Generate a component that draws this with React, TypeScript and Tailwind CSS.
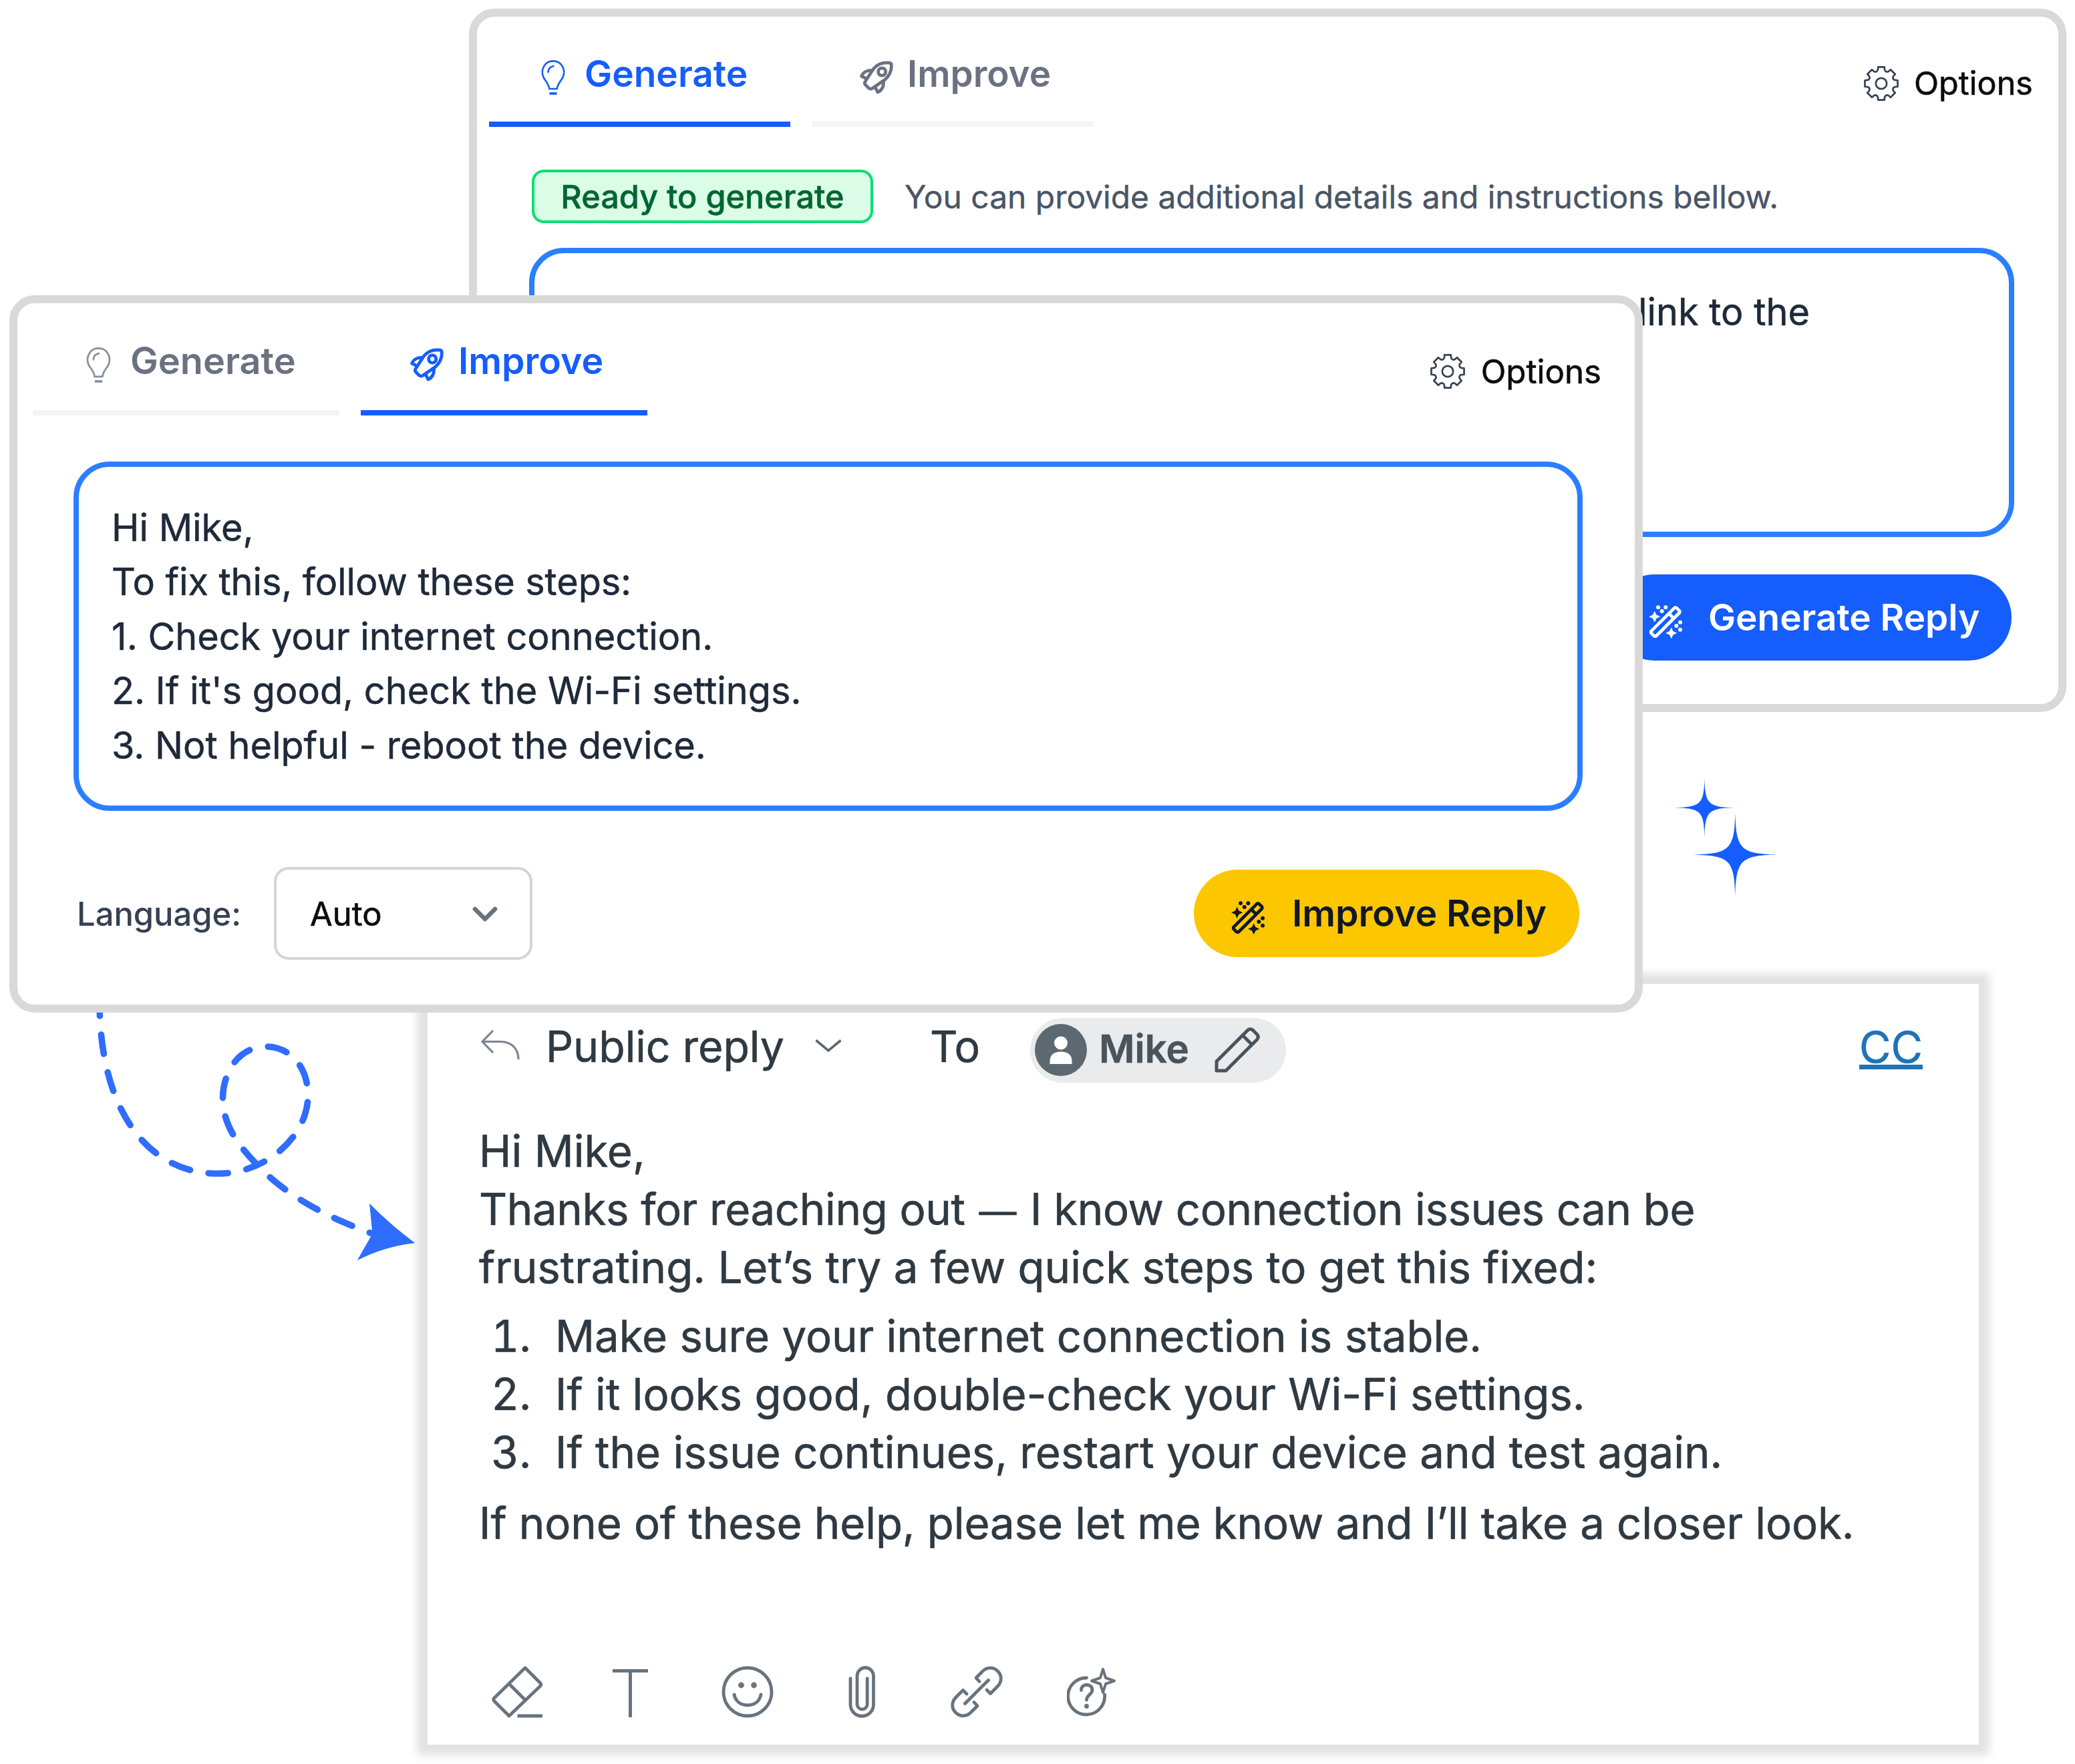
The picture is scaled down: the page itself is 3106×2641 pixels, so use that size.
import type { ReactNode } from "react";
import clsx from "clsx";

/* Icons */

function BulbIcon({ className }: { className?: string }) {
  return (
    <svg viewBox="0 0 52 52" fill="none" stroke="currentColor" strokeWidth="2.6" strokeLinejoin="round" strokeLinecap="round" className={className}>
      <path d="M20.2 43C19.8 36.5 15 32 11.6 26C6.4 14.5 13.5 1.4 26 1.4S45.6 14.5 40.4 26C37 32 32.2 36.5 31.8 43Z" />
      <path d="M18.5 18C18.8 13 21.5 9.8 26.5 9" />
      <path d="M20.5 50H31.5" strokeWidth="3.6" strokeLinecap="butt" />
    </svg>
  );
}

function RocketIcon({ className }: { className?: string }) {
  return (
    <svg viewBox="0 0 50 50" fill="none" stroke="currentColor" strokeWidth="4.8" strokeLinejoin="round" strokeLinecap="round" className={className}>
      <path d="M44.5 3.2Q47 3.4 47.2 5.8C48 14.5 44.5 22 38 28L18.5 41.5Q15.8 43 13.5 41L8.5 36Q6.5 33.8 8 31.2L20.5 12C26.5 5 34.5 2 44.5 3.2Z" />
      <circle cx="33.2" cy="16.5" r="5.6" />
      <path d="M18.5 14.5C10.5 14 4.5 17.5 2.6 23.2L9.5 26.5" />
      <path d="M35.5 31C36 39.5 32.5 44.5 26.8 47L23.5 40.5" />
    </svg>
  );
}

function point(deg: number, r: number) {
  const a = ((deg - 90) * Math.PI) / 180;
  return `${(27 + r * Math.cos(a)).toFixed(2)} ${(27 + r * Math.sin(a)).toFixed(2)}`;
}

const gearPath =
  [0, 45, 90, 135, 180, 225, 270, 315]
    .map((a, i) => `${i === 0 ? "M" : "L"}${point(a - 11, 25)}L${point(a + 11, 25)}L${point(a + 14, 21)}Q${point(a + 22.5, 17.5)} ${point(a + 31, 21)}`)
    .join("") + "Z";

function GearIcon({ className }: { className?: string }) {
  return (
    <svg viewBox="0 0 54 54" fill="none" stroke="currentColor" strokeWidth="2.7" strokeLinejoin="round" className={className}>
      <path d={gearPath} />
      <circle cx="27" cy="27" r="8.2" />
    </svg>
  );
}

function WandIcon({ className }: { className?: string }) {
  return (
    <svg viewBox="0 0 50 50" fill="currentColor" className={className}>
      <g transform="rotate(-45 23.7 25.2)" fill="none" stroke="currentColor" strokeWidth="4.8">
        <rect x="-3" y="20" width="53.5" height="10.4" rx="2.5" />
        <path d="M36.5 20V30.4" />
      </g>
      <path d="M7.7 8.8L10.4 14.6L16.2 17.3L10.4 20L7.7 25.8L5 20L-.8 17.3L5 14.6Z" />
      <path d="M32.7 33.2L35.4 39L41.2 41.7L35.4 44.4L32.7 50.2L30 44.4L24.2 41.7L30 39Z" />
      <circle cx="13" cy="3.3" r="3" />
      <circle cx="24.3" cy="3.3" r="3" />
      <circle cx="18.7" cy="9" r="3" />
      <circle cx="46" cy="25.7" r="3" />
      <circle cx="40.3" cy="31" r="3" />
      <circle cx="46" cy="36.7" r="3" />
    </svg>
  );
}

function Sparkle({ cx, cy, r }: { cx: number; cy: number; r: number }) {
  return (
    <path
      transform={`translate(${cx} ${cy}) scale(${r})`}
      d="M0-1C.02-.13 .13-.02 1 0C.13.02 .02.13 0 1C-.02.13-.13.02-1 0C-.13-.02-.02-.13 0-1Z"
    />
  );
}

/* Assistant cards */

function Tab({ icon, label, active, className }: { icon: ReactNode; label: string; active?: boolean; className?: string }) {
  return (
    <div
      className={clsx(
        "flex shrink-0 items-start border-b-8 font-semibold leading-[64px]",
        active ? "border-[#155dfc] text-[#155dfc]" : "border-gray-100 text-[#6a7282]",
        className
      )}
    >
      {icon}
      <span>{label}</span>
    </div>
  );
}

function Options({ className }: { className?: string }) {
  return (
    <div className={clsx("ml-auto flex items-center leading-[56px] text-[#0c0c0e]", className)}>
      <GearIcon className="size-[54px] text-[#364153]" />
      <span className="[-webkit-text-stroke:0.6px]">Options</span>
    </div>
  );
}

function GenerateCard() {
  return (
    <section className="absolute left-[702px] top-[13px] flex h-[1053px] w-[2391px] flex-col rounded-[38px] border-12 border-[#d9d9d9] bg-white">
      <div className="flex h-[165px] gap-8 pl-[18px]">
        <Tab
          active
          label="Generate"
          icon={<BulbIcon className="mt-[12px] size-[52px]" />}
          className="w-[451px] gap-[21px] pl-[70px] pt-[53px] text-[55px]"
        />
        <Tab
          label="Improve"
          icon={<RocketIcon className="mt-[13px] size-[50px]" />}
          className="w-[422px] gap-[21px] pl-[72px] pt-[53px] text-[54.8px]"
        />
        <Options className="mr-[38px] self-start gap-[22px] pt-[72px] text-[48.6px]" />
      </div>

      <div className="mt-[64px] flex items-center gap-[47px] pl-[82px]">
        <span className="flex h-20 w-[511px] items-center justify-center rounded-[18px] border-4 border-[#05df72] bg-green-100 pt-[2px] text-[48.6px] font-medium text-[#016630] [-webkit-text-stroke:0.5px]">
          Ready to generate
        </span>
        <span className="pt-[3px] text-[47.9px] text-[#4a5565] [-webkit-text-stroke:0.4px]">You can provide additional details and instructions bellow.</span>
      </div>

      <div className="ml-[78px] mt-[37px] h-[433px] w-[2223px] rounded-[52px] border-8 border-[#2b7fff] pl-[1652px] pt-[47px] text-[55.8px] leading-[82px] text-[#1e2939] [-webkit-text-stroke:0.5px]">
        link to the
      </div>

      <div className="mt-14 flex justify-end pr-[70px]">
        <button className="flex h-[129px] w-[599px] items-center rounded-full bg-[#155dfc] pl-[57px] text-[54.9px] font-semibold text-white">
          <WandIcon className="mr-[38px] mt-3 size-[50px] overflow-visible" />
          <span>Generate Reply</span>
        </button>
      </div>
    </section>
  );
}

function ImproveCard() {
  return (
    <section className="absolute left-[14px] top-[442px] flex h-[1074px] w-[2445px] flex-col rounded-[38px] border-12 border-[#d9d9d9] bg-white">
      <div className="flex h-[168px] gap-8 pl-[24px]">
        <Tab
          label="Generate"
          icon={<BulbIcon className="mt-[12px] size-[53px] opacity-80" />}
          className="w-[458px] gap-[21px] pl-[71px] pt-[54px] text-[55.8px]"
        />
        <Tab
          active
          label="Improve"
          icon={<RocketIcon className="mt-[13px] size-[50px]" />}
          className="w-[429px] gap-[22px] pl-[74px] pt-[54px] text-[55.3px]"
        />
        <Options className="mr-[50px] self-start gap-[23px] pt-[74px] text-[49.2px]" />
      </div>

      <div className="ml-[84px] mt-[69px] h-[523px] w-[2259px] rounded-[54px] border-8 border-[#2b7fff] pl-[49px] pt-[50px] text-[55.8px] leading-[81.4px] text-[#1e2939] [-webkit-text-stroke:0.5px]">
        <p>Hi Mike,</p>
        <p className="tracking-[-0.1px]">To fix this, follow these steps:</p>
        <p>1. Check your internet connection.</p>
        <p>2. If it's good, check the Wi-Fi settings.</p>
        <p>3. Not helpful - reboot the device.</p>
      </div>

      <div className="mt-[84px] flex items-center pl-[89px] pr-[83px] text-[48.9px]">
        <span className="w-[295px] pt-[2px] font-medium text-[#364153]">Language:</span>
        <div className="flex h-[139px] w-[387px] items-center justify-between rounded-[22px] border-4 border-gray-300 pl-[50px] pr-[48px] pt-[2px] text-[#0c0c0e]">
          <span className="[-webkit-text-stroke:0.6px]">Auto</span>
          <svg viewBox="0 0 38 24" fill="none" stroke="#6a7282" strokeWidth="6.6" strokeLinecap="round" strokeLinejoin="round" className="h-6 w-[38px]">
            <path d="M4 4L19 19L34 4" />
          </svg>
        </div>
        <button className="ml-auto flex h-[131px] w-[577px] items-center rounded-full bg-[#fdc700] pl-[57px] text-[55.3px] font-semibold text-[#101828]">
          <WandIcon className="mr-[40px] mt-3 size-[50px] overflow-visible" />
          <span>Improve Reply</span>
        </button>
      </div>
    </section>
  );
}

/* Ticket reply editor */

const steps = [
  "Make sure your internet connection is stable.",
  "If it looks good, double-check your Wi-Fi settings.",
  "If the issue continues, restart your device and test again.",
];

function ReplyPanel() {
  return (
    <section className="absolute left-[640px] top-[1473px] flex h-[1139px] w-[2322px] flex-col bg-white pt-[45px] text-[65.3px] leading-[87px] text-[#2f3941] shadow-[0_0_12px_16px_#e2e2e2] [-webkit-text-stroke:0.6px]">
      <div className="flex h-[108px] items-center pl-[80px] text-[64.4px]">
        <svg viewBox="0 0 58 46" fill="none" stroke="#7b858e" strokeWidth="3.2" className="-mt-[14px] h-[46px] w-[58px]">
          <path d="M18 1L2 17.5L18 34M2 17.5H28C45 17.5 56 27 56 44" />
        </svg>
        <span className="-mt-[9px] ml-[39px] w-[403px] whitespace-nowrap">Public reply</span>
        <svg viewBox="0 0 40 20" fill="none" stroke="#5c6770" strokeWidth="3.6" className="-mt-[13px] h-5 w-10">
          <path d="M1.5 1.5L20 17L38.5 1.5" />
        </svg>
        <span className="-mt-[9px] ml-[132px] w-[150px]">To</span>

        <div className="flex h-[97px] w-[383px] items-center rounded-full bg-[#e9ebed] pl-[7px] text-[58px] font-semibold text-[#49545c]">
          <svg viewBox="0 0 78 78" className="size-[78px]">
            <circle cx="39" cy="39" r="39" fill="#5c6970" />
            <circle cx="39" cy="28.5" r="10" fill="#fff" />
            <path d="M22.5 60V55C22.5 46.5 29 41.5 39 41.5S55.5 46.5 55.5 55V60Z" fill="#fff" />
          </svg>
          <span className="-mt-[3px] ml-[18px] w-[173px]">Mike</span>
          <svg viewBox="0 0 68 68" fill="none" stroke="currentColor" strokeWidth="5" strokeLinejoin="round" className="size-[68px]">
            <path d="M3 65V51L49.5 4.5Q53.5 1 57.5 4.5L63.5 10.5Q67 14.5 63.5 18.5L17 65Z" />
            <path d="M42 12L56 26" />
          </svg>
        </div>

        <a className="-mt-[9px] ml-auto mr-[84px] text-[65px] text-[#1f73b7] underline decoration-[7px] underline-offset-[3px] [text-decoration-skip-ink:none]">
          CC
        </a>
      </div>

      <div className="mt-[54px] pl-[77px]">
        <p>Hi Mike,</p>
        <p className="tracking-[-0.36px]">
          Thanks for reaching out <span className="inline-block px-[3px] text-[56px] leading-none">—</span> I know connection issues can be
        </p>
        <p>frustrating. Let’s try a few quick steps to get this fixed:</p>
        <ol className="mt-4">
          {steps.map((step, i) => (
            <li key={step} className="flex">
              <span className="w-[114px] pl-[18px] tabular-nums">{i + 1}.</span>
              <span>{step}</span>
            </li>
          ))}
        </ol>
        <p className="mt-[19px] tracking-[-0.1px]">If none of these help, please let me know and I’ll take a closer look.</p>
      </div>

      <div className="mb-[40px] mt-auto flex items-center pl-[96px] text-[#68737d]">
        <svg viewBox="0 0 77 78" fill="none" stroke="currentColor" strokeWidth="4.8" strokeLinejoin="round" className="h-[78px] w-[77px]">
          <path d="M50 3L73 26Q74.5 28 73 30L26 75L3.5 52.5Q2 50.5 3.5 48.5ZM26 27L50.5 51.5" />
          <path d="M38.5 75H76" />
        </svg>
        <svg viewBox="0 0 54 78" fill="none" stroke="currentColor" strokeWidth="5" className="ml-[104px] h-[78px] w-[54px]">
          <path d="M0 7.5H53M26.5 7.5V77" />
        </svg>
        <svg viewBox="0 0 78 78" fill="none" stroke="currentColor" strokeWidth="4.8" strokeLinecap="round" className="ml-[109px] size-[78px]">
          <circle cx="39" cy="39" r="36" />
          <circle cx="29.5" cy="29" r="4.4" fill="currentColor" stroke="none" />
          <circle cx="48.5" cy="29" r="4.4" fill="currentColor" stroke="none" />
          <path d="M19 43C21 53 28.5 59 39 59S57 53 59 43" />
        </svg>
        <svg viewBox="0 0 41 78" fill="none" stroke="currentColor" strokeWidth="4.8" strokeLinecap="round" className="ml-[112px] h-[78px] w-[41px]">
          <path d="M3 19V58A17.2 17.2 0 0 0 37.5 58V15A12.2 12.2 0 0 0 13 15V57.5A7.6 7.6 0 0 0 28.2 57.5V19" />
        </svg>
        <svg viewBox="0 0 78 78" fill="none" stroke="currentColor" strokeWidth="4.8" strokeLinecap="round" strokeLinejoin="round" className="ml-[112px] size-[78px]">
          <path d="M24 42L18.5 36.5L8 47C1 54 1 63.5 7.5 70C14 76.5 23.5 76.5 30.5 69.5L40 60L35 54.5" />
          <path d="M54 36L59.5 41.5L70 31C77 24 77 14.5 70.5 8C64 1.5 54.5 1.5 47.5 8.5L38 18L43 23.5" />
          <path d="M21.5 56.5L56.5 21.5" />
        </svg>
        <svg viewBox="0 0 74 78" fill="none" stroke="currentColor" strokeWidth="4.8" strokeLinecap="round" strokeLinejoin="round" className="ml-[96px] h-[78px] w-[74px]">
          <path d="M29.5 18A27.5 27.5 0 1 0 56.5 43" />
          <path d="M54 5L58 18L71 22.5L58 27L54 40L50 27L37 22.5L50 18Z" strokeWidth="4" />
          <path d="M21.5 36.5C21.5 31 25 28.5 29.5 28.5C34.5 28.5 38 31.5 38 36.5C38 42.5 29.5 43.5 29.5 51" />
          <circle cx="29.5" cy="60.5" r="3.4" fill="currentColor" stroke="none" />
        </svg>
      </div>
    </section>
  );
}

export default function App() {
  return (
    <main className="relative h-[2641px] w-[3106px] overflow-hidden bg-white font-['Inter',sans-serif]">
      <ReplyPanel />

      {/* Dashed arrow from the card to the reply */}
      <svg viewBox="0 0 540 460" fill="none" className="absolute left-[100px] top-[1460px] h-[460px] w-[540px] text-[#2f6dff]">
        <g transform="translate(-100 -1460)">
          <path
            d="M149 1491.8C147 1660 220 1757 326 1757C400 1757 461 1700 461 1640C461 1598 435 1567 398 1567C358 1567 333.5 1604 333.5 1645C333.5 1690 365 1726 403.5 1762C448 1801 500 1826 560 1848"
            pathLength={1090}
            stroke="currentColor"
            strokeWidth="9.6"
            strokeLinecap="round"
            strokeDasharray="29 28"
          />
          <path d="M553 1801.7Q585 1834 621.2 1861Q576 1866 534.7 1887L557.5 1847Z" fill="currentColor" />
        </g>
      </svg>

      <GenerateCard />
      <ImproveCard />

      <svg viewBox="0 0 160 180" className="absolute left-[2503px] top-[1163px] h-[180px] w-[160px] fill-[#155dfc]">
        <Sparkle cx={48.4} cy={46.3} r={44} />
        <Sparkle cx={94.4} cy={116.5} r={62.7} />
      </svg>
    </main>
  );
}
